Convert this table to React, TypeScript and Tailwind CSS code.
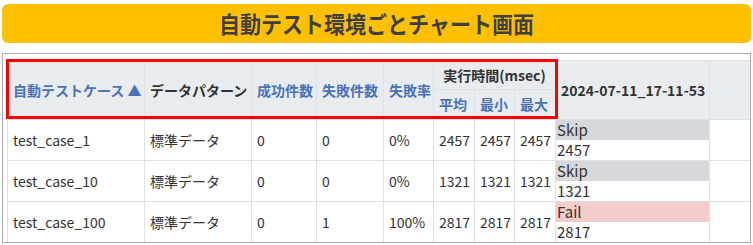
import React from "react";

const rows = [
  { name: "test_case_1", pattern: "標準データ", ok: 0, ng: 0, rate: "0%", avg: 2457, min: 2457, max: 2457, status: "Skip", time: 2457 },
  { name: "test_case_10", pattern: "標準データ", ok: 0, ng: 0, rate: "0%", avg: 1321, min: 1321, max: 1321, status: "Skip", time: 1321 },
  { name: "test_case_100", pattern: "標準データ", ok: 0, ng: 1, rate: "100%", avg: 2817, min: 2817, max: 2817, status: "Fail", time: 2817 },
];

const font = { fontFamily: '"Noto Sans CJK JP", "Noto Sans", sans-serif' };

export default function App() {
  return (
    <div className="w-[753px] h-[245px] overflow-hidden bg-white pt-[4px]" style={font}>
      {/* Title banner */}
      <div className="mx-[2px] h-[39px] rounded-[6px] bg-[#ffc000] flex items-center justify-center">
        <h1 className="text-[21px] font-bold text-[#3f3f3f] leading-none scale-y-110">自動テスト環境ごとチャート画面</h1>
      </div>

      {/* Table panel */}
      <div className="relative mx-[2px] mt-[10px] h-[190px] border border-[#aaaaaa] pl-[4px] pt-[6px] overflow-hidden">
        <table className="table-fixed border-collapse w-[743px] text-[14px] text-[#333]">
          <colgroup>
            <col className="w-[137px]" />
            <col className="w-[107px]" />
            <col className="w-[65px]" />
            <col className="w-[67px]" />
            <col className="w-[50px]" />
            <col className="w-[41px]" />
            <col className="w-[40px]" />
            <col className="w-[41px]" />
            <col className="w-[154px]" />
            <col className="w-[41px]" />
          </colgroup>
          <thead className="bg-[#e9ecef] font-bold">
            <tr className="h-[29px]">
              <th rowSpan={2} className="border border-[#dee2e6] px-[5px] text-left text-[#4a72b8] whitespace-nowrap">
                自動テストケース ▲
              </th>
              <th rowSpan={2} className="border border-[#dee2e6] px-[5px] text-left whitespace-nowrap">データパターン</th>
              <th rowSpan={2} className="border border-[#dee2e6] px-[5px] text-left text-[#4a72b8] whitespace-nowrap">成功件数</th>
              <th rowSpan={2} className="border border-[#dee2e6] px-[5px] text-left text-[#4a72b8] whitespace-nowrap">失敗件数</th>
              <th rowSpan={2} className="border border-[#dee2e6] px-[5px] text-left text-[#4a72b8] whitespace-nowrap">失敗率</th>
              <th colSpan={3} className="border border-[#dee2e6] text-center whitespace-nowrap">実行時間(msec)</th>
              <th rowSpan={2} className="border border-[#dee2e6] px-[5px] text-left whitespace-nowrap">2024-07-11_17-11-53</th>
              <th rowSpan={2} className="border border-[#dee2e6]"></th>
            </tr>
            <tr className="h-[30px]">
              <th className="border border-[#dee2e6] px-[5px] text-left text-[#4a72b8] whitespace-nowrap">平均</th>
              <th className="border border-[#dee2e6] px-[5px] text-left text-[#4a72b8] whitespace-nowrap">最小</th>
              <th className="border border-[#dee2e6] px-[5px] text-left text-[#4a72b8] whitespace-nowrap">最大</th>
            </tr>
          </thead>
          <tbody>
            {rows.map((r) => (
              <tr key={r.name} className="h-[41px]">
                <td className="border border-[#dee2e6] px-[5px] whitespace-nowrap">{r.name}</td>
                <td className="border border-[#dee2e6] px-[5px] whitespace-nowrap">{r.pattern}</td>
                <td className="border border-[#dee2e6] px-[5px]">{r.ok}</td>
                <td className="border border-[#dee2e6] px-[5px]">{r.ng}</td>
                <td className="border border-[#dee2e6] px-[5px]">{r.rate}</td>
                <td className="border border-[#dee2e6] px-[5px]">{r.avg}</td>
                <td className="border border-[#dee2e6] px-[5px]">{r.min}</td>
                <td className="border border-[#dee2e6] px-[5px]">{r.max}</td>
                <td className="border border-[#dee2e6] p-0 align-top text-[15px]">
                  <div className={`h-[20px] leading-[20px] pl-[1px] ${r.status === "Fail" ? "bg-[#f4cccc]" : "bg-[#d6d8db]"}`}>
                    {r.status}
                  </div>
                  <div className="h-[20px] leading-[20px] pl-[1px]">{r.time}</div>
                </td>
                <td className="border border-[#dee2e6]"></td>
              </tr>
            ))}
          </tbody>
        </table>

        {/* highlight annotation over header */}
        <div className="absolute left-[3px] top-[5px] w-[552px] h-[60px] border-[3px] border-[#ff0000] pointer-events-none" />
      </div>
    </div>
  );
}
